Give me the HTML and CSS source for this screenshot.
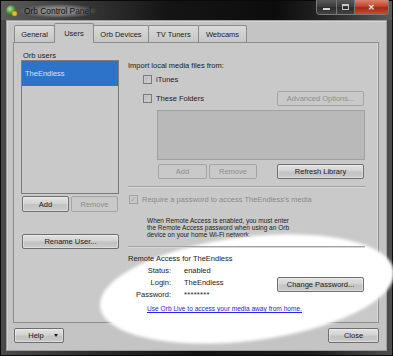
FILE: index.html
```html
<!DOCTYPE html>
<html lang="en">
<head>
    <meta charset="UTF-8">
    <meta name="viewport" content="width=device-width, initial-scale=1.0">
    <title>Orb Control Panel</title>
    <link rel="stylesheet" href="styles.css">
</head>
<body>
    <div class="window">
        <div class="titlebar">
            <svg class="app-icon" width="13" height="12" viewBox="0 0 13 12">
                <defs>
                    <radialGradient id="orb" cx="40%" cy="35%" r="65%">
                        <stop offset="0" stop-color="#b9e29a"/>
                        <stop offset="0.6" stop-color="#4f9a3c"/>
                        <stop offset="1" stop-color="#2d6a22"/>
                    </radialGradient>
                </defs>
                <circle cx="6" cy="5.5" r="5" fill="url(#orb)"/>
                <circle cx="9.5" cy="8.5" r="2.6" fill="#e8b830" stroke="#a87a10" stroke-width="0.6"/>
            </svg>
            <span class="title">Orb Control Panel</span>
            <div class="caption-buttons">
                <span class="cap cap-min"><i></i></span>
                <span class="cap cap-max"><i></i></span>
                <span class="cap cap-close">&#x2715;</span>
            </div>
        </div>

        <div class="client">
            <div class="tabs">
                <div class="tab tab-general">General</div>
                <div class="tab tab-users active">Users</div>
                <div class="tab tab-devices">Orb Devices</div>
                <div class="tab tab-tuners">TV Tuners</div>
                <div class="tab tab-webcams">Webcams</div>
            </div>

            <div class="panel">
                <div class="col-left">
                    <div class="label users-label">Orb users</div>
                    <div class="listbox users-list">
                        <div class="list-item selected">TheEndless</div>
                    </div>
                    <div class="btn-row">
                        <button class="btn btn-half">Add</button>
                        <button class="btn btn-half" disabled>Remove</button>
                    </div>
                    <button class="btn btn-rename">Rename User...</button>
                </div>

                <div class="col-right">
                    <div class="label import-label">Import local media files from:</div>
                    <div class="check-row itunes-row">
                        <span class="checkbox"></span>
                        <span>iTunes</span>
                    </div>
                    <div class="check-row folders-row">
                        <span class="checkbox"></span>
                        <span>These Folders</span>
                        <button class="btn btn-advanced" disabled>Advanced Options...</button>
                    </div>
                    <div class="listbox folders-list"></div>
                    <div class="folder-buttons">
                        <button class="btn btn-fadd" disabled>Add</button>
                        <button class="btn btn-fremove" disabled>Remove</button>
                        <button class="btn btn-refresh">Refresh Library</button>
                    </div>

                    <div class="separator sep-top"></div>

                    <div class="check-row require-row disabled">
                        <span class="checkbox checked">&#x2713;</span>
                        <span>Require a password to access TheEndless's media</span>
                    </div>
                    <p class="note">
                        When Remote Access is enabled, you must enter<br>
                        the Remote Access password when using an Orb<br>
                        device on your home Wi-Fi network.
                    </p>

                    <div class="separator sep-bottom"></div>

                    <div class="label remote-title">Remote Access for TheEndless</div>
                    <div class="remote-info">
                        <div class="info-grid">
                            <span class="info-key">Status:</span><span class="info-val">enabled</span>
                            <span class="info-key">Login:</span><span class="info-val">TheEndless</span>
                            <span class="info-key">Password:</span><span class="info-val stars">********</span>
                        </div>
                        <button class="btn btn-change">Change Password...</button>
                    </div>
                    <a class="orb-link" href="#">Use Orb Live to access your media away from home.</a>
                </div>
            </div>

            <div class="footer">
                <button class="btn btn-help">Help <span class="caret"></span></button>
                <button class="btn btn-close">Close</button>
            </div>

            <div class="highlight"></div>
        </div>
    </div>
</body>
</html>
```

FILE: styles.css
```css
* {
    box-sizing: border-box;
}
body {
    margin: 0;
    background-color: #111;
    font-family: "Liberation Sans", Arial, sans-serif;
    font-size: 7.5px;
    color: #1a1a1a;
}
.window {
    width: 393px;
    height: 356px;
    display: flex;
    flex-direction: column;
    padding: 0 5px 4px 5px;
    background: linear-gradient(to right, #4a4a4a 0%, #2a2a2a 25%, #121212 50%, #1c1c1c 80%, #4e4e4e 100%);
    border: 1px solid #0a0a0a;
}
.titlebar {
    height: 19px;
    display: flex;
    align-items: center;
    margin: 0 -5px;
    padding-left: 4px;
    position: relative;
    background: linear-gradient(to right, #5c5c5c 0%, #3c3c3c 18%, #151515 42%, #0c0c0c 70%, #262626 84%, #5a5a5a 100%);
}
.app-icon {
    margin-top: 1px;
}
.title {
    margin-left: 2px;
    padding: 2px 6px 2px 4px;
    font-size: 8.4px;
    color: #141414;
    background: radial-gradient(ellipse at center, rgba(150, 150, 150, 0.8) 35%, rgba(120, 120, 120, 0) 72%);
}
.caption-buttons {
    position: absolute;
    top: -1px;
    right: 3px;
    display: flex;
    height: 15px;
    border: 1px solid #7a7a7a;
    border-top: none;
    border-radius: 0 0 4px 4px;
    overflow: hidden;
}
.cap {
    display: flex;
    align-items: center;
    justify-content: center;
    height: 100%;
    background: linear-gradient(#5a5a5a, #3a3a3a 50%, #2c2c2c 51%, #444);
    border-right: 1px solid #777;
}
.cap-min {
    width: 20px;
}
.cap-min i {
    width: 7px;
    height: 2px;
    margin-top: 4px;
    background: #d8d8d8;
}
.cap-max {
    width: 18px;
}
.cap-max i {
    width: 7px;
    height: 6px;
    border: 1px solid #c8c8c8;
    border-top-width: 2px;
}
.cap-close {
    width: 33px;
    border-right: none;
    background: linear-gradient(#d8836f, #c2452c 45%, #a52810 55%, #c4502e);
    color: #eee;
    font-size: 8px;
    font-weight: bold;
}

/* client area */
.client {
    flex: 1;
    position: relative;
    display: flex;
    flex-direction: column;
    padding: 2px 7px 0 6px;
    background-color: #c4c4c4;
    border: 1px solid #9e9e9e;
    box-shadow: inset 1px 1px 0 #d4d4d4;
}
.tabs {
    display: flex;
    align-items: flex-end;
    height: 19px;
    padding-left: 1px;
    position: relative;
    z-index: 3;
}
.tab {
    height: 17px;
    display: flex;
    align-items: center;
    justify-content: center;
    padding-top: 1px;
    border: 1px solid #8a8a8a;
    border-bottom: none;
    border-radius: 2px 2px 0 0;
    background: linear-gradient(#dadada, #c6c6c6);
    color: #222;
}
.tab + .tab {
    margin-left: -1px;
}
.tab.active {
    height: 20px;
    margin-bottom: -1px;
    padding-bottom: 2px;
    background: #c9c9c9;
    position: relative;
    z-index: 2;
}
.tab-general { width: 41px; }
.tab-users { width: 40px; }
.tab-devices { width: 56px; }
.tab-tuners { width: 51px; }
.tab-webcams { width: 49px; }

.panel {
    height: 281px;
    display: flex;
    padding: 8px 13px 0 7px;
    background-color: #c9c9c9;
    border: 1px solid #8c8c8c;
    box-shadow: inset -1px 0 0 #dadada;
}
.label {
    line-height: 10px;
    white-space: nowrap;
}
.col-left {
    width: 98px;
    display: flex;
    flex-direction: column;
}
.users-label {
    height: 9px;
    line-height: 9px;
    padding-left: 2px;
}
.listbox {
    border: 1px solid #7c7c7c;
    background-color: #c9c9c9;
}
.users-list {
    height: 134px;
    margin-top: 0;
}
.list-item {
    height: 25px;
    line-height: 25px;
    padding-left: 3px;
}
.list-item.selected {
    background-color: #2c73c9;
    color: #d3e3f7;
}
.btn-row {
    display: flex;
    gap: 2px;
    margin-top: 2px;
    padding-left: 1px;
}
.btn {
    font-family: inherit;
    font-size: 7.5px;
    color: #1a1a1a;
    height: 15px;
    padding: 0;
    border: 1px solid #6e6e6e;
    border-radius: 2px;
    background: linear-gradient(#e2e2e2, #d2d2d2 48%, #c2c2c2 52%, #cacaca);
    box-shadow: inset 0 0 0 1px rgba(255, 255, 255, 0.35);
    white-space: nowrap;
}
.btn:disabled {
    color: #8e8e8e;
    border-color: #a4a4a4;
    background: #c9c9c9;
    box-shadow: none;
}
.btn-half {
    width: 47px;
    height: 16px;
}
.btn-rename {
    width: 97px;
    margin-top: 22px;
    margin-left: 1px;
}

.col-right {
    width: 239px;
    margin-left: 9px;
    display: flex;
    flex-direction: column;
}
.import-label {
    margin-top: 10px;
}
.check-row {
    display: flex;
    align-items: center;
    white-space: nowrap;
}
.checkbox {
    width: 9px;
    height: 9px;
    margin-right: 4px;
    border: 1px solid #7a7a7a;
    background: linear-gradient(135deg, #b4b4b4, #d6d6d6);
    box-shadow: inset 0 0 0 1px #c8c8c8;
    display: flex;
    align-items: center;
    justify-content: center;
    font-size: 8px;
    line-height: 1;
}
.itunes-row {
    height: 11px;
    margin-top: 3px;
    padding-left: 15px;
}
.folders-row {
    height: 15px;
    margin-top: 6px;
    padding-left: 15px;
}
.btn-advanced {
    width: 87px;
    margin-left: auto;
    margin-right: 1px;
}
.folders-list {
    height: 50px;
    margin: 4px 0 0 29px;
    border-color: #a0a0a0;
    background-color: #b9b9b9;
}
.folder-buttons {
    display: flex;
    margin-top: 4px;
    padding-left: 30px;
}
.btn-fadd {
    width: 49px;
}
.btn-fremove {
    width: 48px;
    margin-left: 2px;
}
.btn-refresh {
    width: 87px;
    margin-left: auto;
    margin-right: 1px;
}
.separator {
    height: 2px;
    border-top: 1px solid #a2a2a2;
    border-bottom: 1px solid #d8d8d8;
}
.sep-top {
    margin-top: 7px;
}
.require-row {
    height: 11px;
    margin-top: 6px;
    padding-left: 1px;
    color: #8a8a8a;
}
.checkbox.checked {
    border-color: #a2a2a2;
    background: #c9c9c9;
    box-shadow: none;
    color: #9a9a9a;
}
.note {
    margin: 12px 0 0 19px;
    font-size: 6.5px;
    line-height: 7px;
}
.sep-bottom {
    margin-top: 8px;
    position: relative;
    z-index: 3;
}
.remote-title {
    margin-top: 6px;
    position: relative;
    z-index: 3;
}
.remote-info {
    display: flex;
    align-items: center;
    margin-top: 1px;
    position: relative;
    z-index: 3;
}
.info-grid {
    display: grid;
    grid-template-columns: 43px auto;
    column-gap: 13px;
    line-height: 12px;
}
.info-key {
    text-align: right;
}
.stars {
    letter-spacing: 0.3px;
}
.btn-change {
    width: 87px;
    margin-left: auto;
    margin-right: 1px;
    margin-top: 2px;
}
.orb-link {
    margin: 3px 0 0 19px;
    font-size: 6.6px;
    line-height: 10px;
    color: #2424e6;
    position: relative;
    z-index: 3;
}

.footer {
    display: flex;
    justify-content: space-between;
    margin-top: 5px;
    padding-left: 1px;
}
.btn-help {
    width: 50px;
    position: relative;
    padding-right: 6px;
}
.caret {
    position: absolute;
    right: 5px;
    top: 5px;
    width: 0;
    height: 0;
    border-left: 2.5px solid transparent;
    border-right: 2.5px solid transparent;
    border-top: 3px solid #1a1a1a;
}
.btn-close {
    width: 51px;
}

/* white oval marking the remote access block */
.highlight {
    position: absolute;
    left: 92px;
    top: 216px;
    width: 296px;
    height: 104px;
    border-radius: 50%;
    background-color: #fff;
    transform: rotate(-7deg);
    filter: blur(1.5px);
    z-index: 2;
}
```
